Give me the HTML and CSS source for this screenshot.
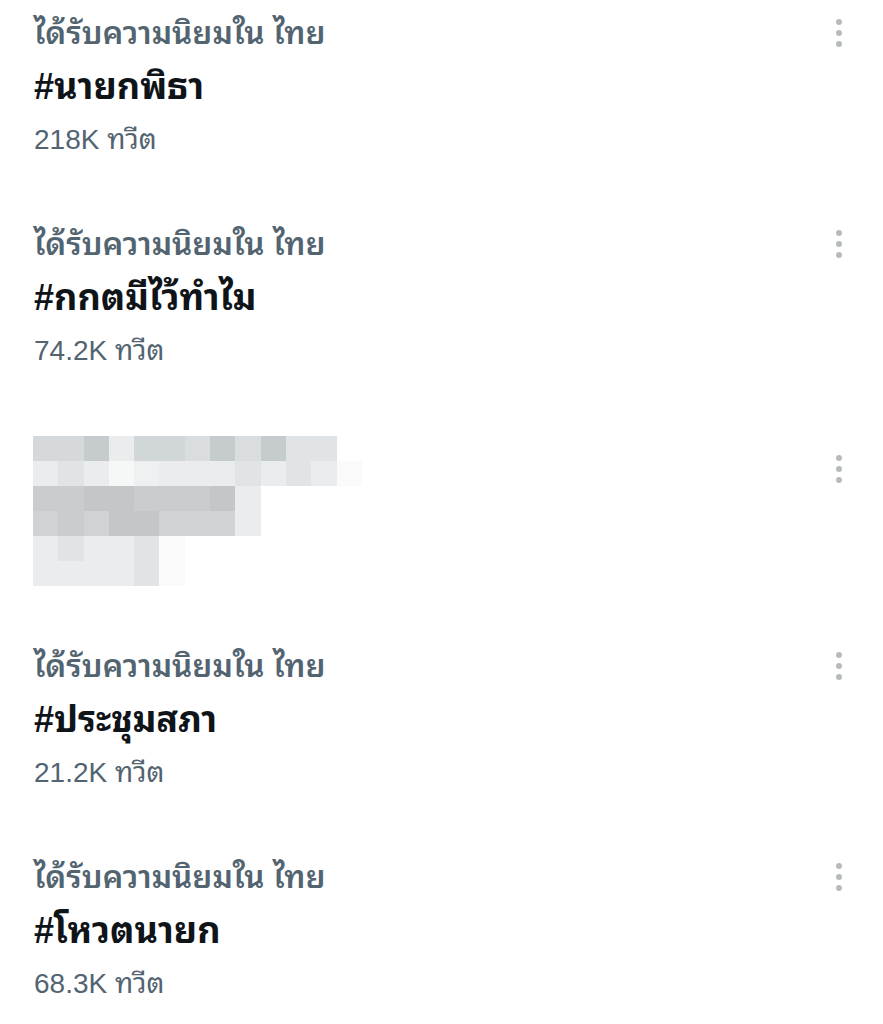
FILE: index.html
```html
<!DOCTYPE html>
<html lang="th">

<head>
    <meta charset="utf-8" />
    <title>กำลังเป็นกระแส</title>
    <link rel="stylesheet" href="styles.css">
</head>

<body>
    <ul class="trends">
        <li class="trend">
            <div class="trend-info">
                <p class="trend-context">ได้รับความนิยมใน ไทย</p>
                <p class="trend-name">#นายกพิธา</p>
                <p class="trend-count">218K ทวีต</p>
            </div>
            <span class="more"><i></i><i></i><i></i></span>
        </li>
        <li class="trend">
            <div class="trend-info">
                <p class="trend-context">ได้รับความนิยมใน ไทย</p>
                <p class="trend-name">#กกตมีไว้ทำไม</p>
                <p class="trend-count">74.2K ทวีต</p>
            </div>
            <span class="more"><i></i><i></i><i></i></span>
        </li>
        <li class="trend trend-hidden">
            <div class="mosaic">
                <div class="mrow">
                    <b class="c1"></b><b class="c1"></b><b class="c3"></b><b class="c6"></b><b class="c2"></b><b class="c2"></b><b class="c4"></b><b class="c3"></b><b class="c4"></b><b class="c3"></b><b class="c5"></b><b class="c5"></b>
                </div>
                <div class="mrow">
                    <b class="c6"></b><b class="c5"></b><b class="c6"></b><b class="c8"></b><b class="c7"></b><b class="c6"></b><b class="c6"></b><b class="c6"></b><b class="c5"></b><b class="c6"></b><b class="c5"></b><b class="c6"></b><b class="c9"></b>
                </div>
                <div class="mrow">
                    <b class="g2"></b><b class="g2"></b><b class="g1"></b><b class="g1"></b><b class="g2"></b><b class="g2"></b><b class="g2"></b><b class="g1"></b><b class="c6"></b>
                </div>
                <div class="mrow">
                    <b class="g3"></b><b class="g2"></b><b class="g3"></b><b class="g1"></b><b class="g1"></b><b class="g3"></b><b class="g3"></b><b class="g3"></b><b class="c6"></b>
                </div>
                <div class="mrow">
                    <b class="c6"></b><b class="c5"></b><b class="c6"></b><b class="c6"></b><b class="c5"></b><b class="c9"></b>
                </div>
                <div class="mrow">
                    <b class="c6"></b><b class="c6"></b><b class="c6"></b><b class="c6"></b><b class="c5"></b><b class="c9"></b>
                </div>
            </div>
            <span class="more"><i></i><i></i><i></i></span>
        </li>
        <li class="trend">
            <div class="trend-info">
                <p class="trend-context">ได้รับความนิยมใน ไทย</p>
                <p class="trend-name">#ประชุมสภา</p>
                <p class="trend-count">21.2K ทวีต</p>
            </div>
            <span class="more"><i></i><i></i><i></i></span>
        </li>
        <li class="trend">
            <div class="trend-info">
                <p class="trend-context">ได้รับความนิยมใน ไทย</p>
                <p class="trend-name">#โหวตนายก</p>
                <p class="trend-count">68.3K ทวีต</p>
            </div>
            <span class="more"><i></i><i></i><i></i></span>
        </li>
    </ul>
</body>

</html>
```
FILE: styles.css
```css
*,
*::before,
*::after {
    margin: 0;
    padding: 0;
    box-sizing: border-box;
}

body {
    background: #fff;
    font-family: "Liberation Sans", "Noto Sans Thai Looped", "Noto Sans Thai", "Noto Sans", sans-serif;
    color: #0f1419;
}

.trends {
    list-style: none;
    padding-top: 7px;
}

.trend {
    height: 211px;
    padding: 0 39px 0 34px;
    display: flex;
    justify-content: space-between;
    align-items: flex-start;
}

.trend-info p {
    height: 53px;
    line-height: 53px;
    white-space: nowrap;
}

.trend-context {
    font-size: 31.5px;
    font-weight: 600;
    color: #536471;
}

.trend-name {
    font-size: 36px;
    font-weight: bold;
}

.trend-count {
    font-size: 28px;
    color: #536471;
}

.more {
    width: 10px;
    margin-top: 12px;
    display: flex;
    flex-direction: column;
    align-items: center;
    gap: 5px;
}

.more i {
    width: 6px;
    height: 6px;
    border-radius: 50%;
    background: #b6bbbf;
}

/* blurred trend */
.trend-hidden {
    padding-top: 7px;
    padding-left: 33px;
}

.trend-hidden .more {
    margin-top: 19px;
}

.mosaic {
    filter: blur(0.6px);
}

.mrow {
    display: flex;
}

.mrow b {
    width: 25.3px;
    height: 25px;
}

.c1 { background: #d5d9dc; }
.c2 { background: #d1d6d9; }
.c3 { background: #c6cbce; }
.c4 { background: #dadde0; }
.c5 { background: #e1e4e6; }
.c6 { background: #eaecee; }
.c7 { background: #eef0f1; }
.c8 { background: #f6f7f7; }
.c9 { background: #fafafa; }
.g1 { background: #c4c6c8; }
.g2 { background: #cacccf; }
.g3 { background: #d1d2d4; }
```
